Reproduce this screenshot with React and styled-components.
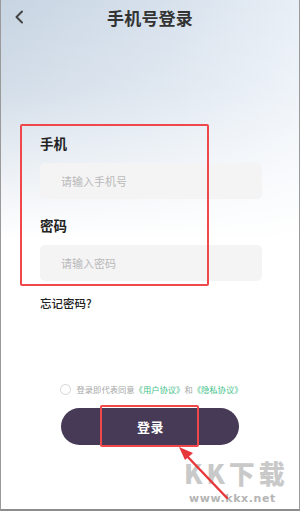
import React from "react";
import styled, { createGlobalStyle } from "styled-components";

const Global = createGlobalStyle`
  html, body { margin: 0; padding: 0; background: #fff; }
  body { font-family: "Noto Sans CJK SC", "Noto Sans", sans-serif; }
  * { box-sizing: border-box; }
`;

const Frame = styled.div`
  position: relative;
  width: 300px;
  height: 511px;
  overflow: hidden;
  display: flex;
  flex-direction: column;
  border-left: 1px solid #9a9a9a;
  border-right: 1px solid #9a9a9a;
  border-bottom: 2px solid #8c8c8c;
  background:
    linear-gradient(to bottom, rgba(255,255,255,0) 0px, rgba(255,255,255,0.2) 90px, #fff 240px),
    linear-gradient(100deg, #c7d4e2 0%, #d8e2ed 45%, #eaf0f7 80%, #f3f6fb 100%);
`;

const Header = styled.div`
  position: relative;
  height: 35px;
  display: flex;
  align-items: center;
  justify-content: center;
`;

const Back = styled.button`
  position: absolute;
  left: 11px;
  top: 9px;
  width: 14px;
  height: 16px;
  padding: 0;
  border: none;
  background: none;
  display: flex;
  align-items: center;
  justify-content: center;
`;

const Title = styled.h1`
  margin: 0;
  font-size: 17px;
  line-height: 22px;
  font-weight: 700;
  color: #333;
  letter-spacing: 0.2px;
`;

const Form = styled.div`
  display: flex;
  flex-direction: column;
  padding: 0 38px 0 39px;
  margin-top: 98px;
`;

const Label = styled.div`
  font-size: 13.5px;
  line-height: 20px;
  font-weight: 700;
  color: #222;
  margin-top: ${(p) => p.$top || 0}px;
`;

const Input = styled.input`
  margin-top: 10px;
  height: 36px;
  width: 222px;
  border: none;
  outline: none;
  border-radius: 5px;
  background: #f4f4f5;
  padding: 0 0 0 21px;
  font-family: inherit;
  font-size: 11px;
  color: #333;
  &::placeholder { color: #b9b9b9; }
`;

const Forgot = styled.div`
  margin-top: 14px;
  font-size: 11.5px;
  line-height: 16px;
  font-weight: 500;
  color: #222;
`;

const Agree = styled.div`
  margin-top: 72px;
  display: flex;
  align-items: center;
  justify-content: center;
  gap: 6px;
  height: 12px;
  padding-left: 2px;
`;

const Radio = styled.span`
  width: 11px;
  height: 11px;
  border-radius: 50%;
  border: 1px solid #d4d4d4;
  background: #fff;
  flex: none;
`;

const AgreeText = styled.span`
  font-size: 8.3px;
  line-height: 12px;
  color: #a8a8a8;
  white-space: nowrap;
`;

const Link = styled.span`
  color: #3fc28a;
`;

const LoginButton = styled.button`
  margin: 13px auto 0;
  width: 178px;
  height: 37px;
  border: none;
  border-radius: 19px;
  background: #463a56;
  color: #fff;
  font-family: inherit;
  font-size: 13px;
  font-weight: 700;
  letter-spacing: 0.5px;
  display: flex;
  align-items: center;
  justify-content: center;
  padding: 0 0 0 1px;
`;

const RedBox = styled.div`
  position: absolute;
  left: ${(p) => p.$x}px;
  top: ${(p) => p.$y}px;
  width: ${(p) => p.$w}px;
  height: ${(p) => p.$h}px;
  border: 2px solid #f0474a;
  border-radius: 2px;
  pointer-events: none;
`;

const Arrow = styled.svg`
  position: absolute;
  left: 170px;
  top: 440px;
  pointer-events: none;
`;

const Watermark = styled.div`
  position: absolute;
  left: 183px;
  top: 457px;
  display: flex;
  flex-direction: column;
  align-items: center;
  pointer-events: none;
`;

const WmBig = styled.div`
  font-family: "Noto Sans CJK SC", sans-serif;
  font-size: 26px;
  line-height: 32px;
  font-weight: 900;
  color: #c9c9c9;
  letter-spacing: 4px;
`;

const WmSmall = styled.div`
  font-family: "DejaVu Sans", sans-serif;
  font-size: 11px;
  line-height: 14px;
  font-weight: 700;
  color: #b5b5b5;
  letter-spacing: 0.6px;
  margin-top: 3px;
  margin-left: -8px;
`;

export default function App() {
  return (
    <>
      <Global />
      <Frame>
        <Header>
          <Back aria-label="返回">
            <svg width="10" height="14" viewBox="0 0 10 14">
              <polyline points="8,1.5 2.5,7 8,12.5" fill="none" stroke="#444" strokeWidth="2" strokeLinecap="round" strokeLinejoin="round" />
            </svg>
          </Back>
          <Title>手机号登录</Title>
        </Header>
        <Form>
          <Label>手机</Label>
          <Input placeholder="请输入手机号" />
          <Label $top={16}>密码</Label>
          <Input type="password" placeholder="请输入密码" />
          <Forgot>忘记密码?</Forgot>
        </Form>
        <Agree>
          <Radio />
          <AgreeText>
            登录即代表同意<Link>《用户协议》</Link>和<Link>《隐私协议》</Link>
          </AgreeText>
        </Agree>
        <LoginButton>登录</LoginButton>

        <RedBox $x={19} $y={124} $w={189} $h={162} />
        <RedBox $x={99} $y={405} $w={99} $h={42} />
        <Watermark>
          <WmBig>KK下载</WmBig>
          <WmSmall>www.kkx.net</WmSmall>
        </Watermark>
        <Arrow width="70" height="65" viewBox="0 0 70 65">
          <line x1="56" y1="58" x2="14" y2="14" stroke="#e8373b" strokeWidth="2.4" strokeLinecap="round" />
          <polygon points="8,7 22,13 14,20" fill="#e8373b" />
        </Arrow>
      </Frame>
    </>
  );
}
